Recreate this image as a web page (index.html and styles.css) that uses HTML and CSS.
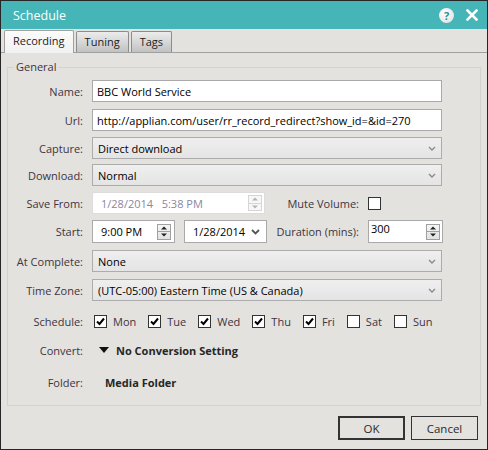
FILE: index.html
```html
<!DOCTYPE html>
<html lang="en">
<head>
    <meta charset="UTF-8">
    <title>Schedule</title>
    <link rel="stylesheet" href="styles.css">
</head>
<body>
    <div class="window">
        <div class="titlebar">
            <span class="title">Schedule</span>
            <span class="help">?</span>
            <svg class="close" width="12" height="12" viewBox="0 0 12 12">
                <path d="M1.5 1.5 L10.5 10.5 M10.5 1.5 L1.5 10.5" stroke="#fff" stroke-width="2.6" stroke-linecap="square"/>
            </svg>
        </div>

        <div class="tabs">
            <div class="tab active">Recording</div>
            <div class="tab">Tuning</div>
            <div class="tab">Tags</div>
        </div>

        <fieldset class="group">
            <legend>General</legend>

            <div class="row">
                <span class="lbl">Name:</span>
                <input class="text" type="text" value="BBC World Service">
            </div>

            <div class="row sp2">
                <span class="lbl">Url:</span>
                <input class="text" type="text" value="http://applian.com/user/rr_record_redirect?show_id=&amp;id=270">
            </div>

            <div class="row sp1">
                <span class="lbl">Capture:</span>
                <div class="select"><span>Direct download</span><svg class="chev" width="8" height="5" viewBox="0 0 8 5"><path d="M1 1 L4 4 L7 1" fill="none" stroke="#8a8a8a" stroke-width="1.4"/></svg></div>
            </div>

            <div class="row">
                <span class="lbl">Download:</span>
                <div class="select"><span>Normal</span><svg class="chev" width="8" height="5" viewBox="0 0 8 5"><path d="M1 1 L4 4 L7 1" fill="none" stroke="#8a8a8a" stroke-width="1.4"/></svg></div>
            </div>

            <div class="row sp1">
                <span class="lbl">Save From:</span>
                <div class="picker disabled">
                    <span>1/28/2014&nbsp;&nbsp;&nbsp;5:38 PM</span>
                    <div class="spin">
                        <div class="half"><svg width="6" height="4" viewBox="0 0 6 4"><path d="M0 3.5 L3 0.5 L6 3.5 Z" fill="#b4b4b4"/></svg></div>
                        <div class="half"><svg width="6" height="4" viewBox="0 0 6 4"><path d="M0 0.5 L3 3.5 L6 0.5 Z" fill="#b4b4b4"/></svg></div>
                    </div>
                </div>
                <span class="lbl2">Mute Volume:</span>
                <span class="box"></span>
            </div>

            <div class="row tall sp1">
                <span class="lbl">Start:</span>
                <div class="picker time">
                    <span>9:00 PM</span>
                    <div class="spin">
                        <div class="half"><svg width="6" height="4" viewBox="0 0 6 4"><path d="M0 3.5 L3 0.5 L6 3.5 Z" fill="#222"/></svg></div>
                        <div class="half"><svg width="6" height="4" viewBox="0 0 6 4"><path d="M0 0.5 L3 3.5 L6 0.5 Z" fill="#222"/></svg></div>
                    </div>
                </div>
                <div class="picker date">
                    <span>1/28/2014</span>
                    <svg class="chev" width="9" height="6" viewBox="0 0 9 6"><path d="M1 1 L4.5 4.5 L8 1" fill="none" stroke="#555" stroke-width="1.8"/></svg>
                </div>
                <span class="lbl2 dur">Duration (mins):</span>
                <div class="picker number">
                    <span>300</span>
                    <div class="spin">
                        <div class="half"><svg width="6" height="4" viewBox="0 0 6 4"><path d="M0 3.5 L3 0.5 L6 3.5 Z" fill="#222"/></svg></div>
                        <div class="half"><svg width="6" height="4" viewBox="0 0 6 4"><path d="M0 0.5 L3 3.5 L6 0.5 Z" fill="#222"/></svg></div>
                    </div>
                </div>
            </div>

            <div class="row sp2">
                <span class="lbl">At Complete:</span>
                <div class="select"><span>None</span><svg class="chev" width="8" height="5" viewBox="0 0 8 5"><path d="M1 1 L4 4 L7 1" fill="none" stroke="#8a8a8a" stroke-width="1.4"/></svg></div>
            </div>

            <div class="row sp2">
                <span class="lbl">Time Zone:</span>
                <div class="select"><span>(UTC-05:00) Eastern Time (US &amp; Canada)</span><svg class="chev" width="8" height="5" viewBox="0 0 8 5"><path d="M1 1 L4 4 L7 1" fill="none" stroke="#8a8a8a" stroke-width="1.4"/></svg></div>
            </div>

            <div class="row sp4">
                <span class="lbl">Schedule:</span>
                <div class="days">
                    <label class="day"><span class="box on"><svg width="11" height="11" viewBox="0 0 11 11"><path d="M2 5.5 L4.5 8 L9 2.5" fill="none" stroke="#000" stroke-width="2"/></svg></span>Mon</label>
                    <label class="day"><span class="box on"><svg width="11" height="11" viewBox="0 0 11 11"><path d="M2 5.5 L4.5 8 L9 2.5" fill="none" stroke="#000" stroke-width="2"/></svg></span>Tue</label>
                    <label class="day"><span class="box on"><svg width="11" height="11" viewBox="0 0 11 11"><path d="M2 5.5 L4.5 8 L9 2.5" fill="none" stroke="#000" stroke-width="2"/></svg></span>Wed</label>
                    <label class="day"><span class="box on"><svg width="11" height="11" viewBox="0 0 11 11"><path d="M2 5.5 L4.5 8 L9 2.5" fill="none" stroke="#000" stroke-width="2"/></svg></span>Thu</label>
                    <label class="day"><span class="box on"><svg width="11" height="11" viewBox="0 0 11 11"><path d="M2 5.5 L4.5 8 L9 2.5" fill="none" stroke="#000" stroke-width="2"/></svg></span>Fri</label>
                    <label class="day"><span class="box"></span>Sat</label>
                    <label class="day"><span class="box"></span>Sun</label>
                </div>
            </div>

            <div class="row sp2">
                <span class="lbl">Convert:</span>
                <div class="convert">
                    <svg width="10" height="6" viewBox="0 0 10 6"><path d="M0 0 L10 0 L5 6 Z" fill="#111"/></svg>
                    <b>No Conversion Setting</b>
                </div>
            </div>

            <div class="row sp5">
                <span class="lbl">Folder:</span>
                <b class="folder">Media Folder</b>
            </div>
        </fieldset>

        <div class="buttons">
            <button class="btn default">OK</button>
            <button class="btn">Cancel</button>
        </div>
    </div>
</body>
</html>
```

FILE: styles.css
```css
* {
    margin: 0;
    padding: 0;
    box-sizing: border-box;
}

body {
    font-family: "Open Sans", "Noto Sans", sans-serif;
    font-size: 11px;
    color: #000;
    background: #fff;
}

.window {
    width: 488px;
    height: 450px;
    border: 1px solid #262626;
    background: #e3e2de;
    display: flex;
    flex-direction: column;
}

/* title bar */
.titlebar {
    height: 28px;
    background: #45b5b8;
    display: flex;
    align-items: center;
    padding: 0 9px 0 12px;
    color: #fff;
}

.title {
    flex: 1;
    font-size: 12.5px;
}

.help {
    width: 15px;
    height: 15px;
    border-radius: 50%;
    background: radial-gradient(circle at 40% 35%, #ffffff, #dcdcdc);
    color: #2f8f93;
    font-weight: 700;
    font-size: 11px;
    line-height: 15px;
    text-align: center;
    margin-right: 12px;
}

/* tabs */
.tabs {
    height: 24px;
    display: flex;
    align-items: flex-end;
    gap: 2px;
    padding-left: 3px;
    border-bottom: 1px solid #a0a0a0;
}

.tab {
    height: 21px;
    padding: 0 8px;
    border: 1px solid #8c8c8c;
    border-bottom: none;
    border-radius: 2px 2px 0 0;
    background: linear-gradient(#ececec, #c2c2c2);
    font-size: 11px;
    line-height: 20px;
    color: #1c1c1c;
}

.tab.active {
    height: 23px;
    margin-bottom: -1px;
    border-color: #a0a0a0;
    background: linear-gradient(#fbfbfb, #f1f1f1);
}

/* group box */
.group {
    margin: 6px 6px 0 6px;
    border: 1px solid #d3d2ce;
    padding: 5px 0 12px 0;
    display: flex;
    flex-direction: column;
    gap: 5px;
}

.group legend {
    margin-left: 6px;
    padding: 0 2px;
    line-height: 16px;
    font-size: 11px;
    color: #3f3440;
}

.row {
    height: 22px;
    display: flex;
    align-items: center;
}

.row.tall {
    height: 23px;
}

.sp1 { margin-top: 1px; }
.sp2 { margin-top: 2px; }
.sp4 { margin-top: 4px; }
.sp5 { margin-top: 5px; }

.lbl {
    width: 75px;
    margin-right: 9px;
    text-align: right;
    color: #3f3440;
}

.lbl2 {
    width: 94px;
    margin-right: 9px;
    text-align: right;
    color: #3f3440;
}

.lbl2.dur {
    width: 92px;
}

.text {
    width: 350px;
    height: 22px;
    border: 1px solid #a9a9a9;
    background: #fff;
    padding: 0 4px;
    font: inherit;
    color: #000;
}

.select {
    width: 350px;
    height: 22px;
    border: 1px solid #acacac;
    background: linear-gradient(#efefef, #e4e4e4);
    display: flex;
    align-items: center;
    padding: 0 5px;
}

.select span {
    flex: 1;
}

.chev {
    display: block;
}

/* pickers and spinners */
.picker {
    height: 100%;
    border: 1px solid #a9a9a9;
    background: #fff;
    display: flex;
    align-items: center;
}

.picker span {
    flex: 1;
}

.picker.disabled {
    width: 173px;
    border-color: #dcdcdc;
    color: #8c86a0;
    padding: 0 2px 0 8px;
}

.picker.time {
    width: 83px;
    padding: 0 3px 0 8px;
}

.picker.date {
    width: 83px;
    margin-left: 9px;
    padding: 0 6px 0 8px;
}

.picker.number {
    width: 75px;
    padding: 0 2px 0 2px;
    align-items: flex-start;
}

.picker.number span {
    line-height: 16px;
}

.picker.number .spin {
    align-self: center;
}

.spin {
    width: 14px;
    height: 16px;
    border: 1px solid #a0a0a0;
    background: linear-gradient(#f6f6f6, #e2e2e2);
    display: flex;
    flex-direction: column;
}

.disabled .spin {
    border-color: #d6d6d6;
    background: #f7f7f7;
}

.half {
    flex: 1;
    display: flex;
    align-items: center;
    justify-content: center;
}

.half + .half {
    border-top: 1px solid #a0a0a0;
}

.disabled .half + .half {
    border-top-color: #d6d6d6;
}

.half svg {
    display: block;
}

/* checkboxes */
.box {
    width: 13px;
    height: 13px;
    border: 1px solid #333;
    background: #fff;
    display: flex;
    align-items: center;
    justify-content: center;
}

.days {
    display: flex;
    align-items: center;
    margin-left: 2px;
}

.day {
    display: flex;
    align-items: center;
    gap: 6px;
    margin-right: 12px;
    color: #3f3440;
}

/* convert & folder */
.convert {
    display: flex;
    align-items: center;
    gap: 7px;
    margin-left: 7px;
}

.convert b,
.folder {
    font-weight: 700;
    color: #262626;
}

.folder {
    margin-left: 13px;
}

/* buttons */
.buttons {
    display: flex;
    justify-content: flex-end;
    gap: 6px;
    padding: 10px 9px 0 0;
}

.btn {
    width: 67px;
    height: 24px;
    border: 1px solid #333;
    background: #e3e2de;
    font: inherit;
    font-size: 11.5px;
    color: #2a2a2a;
}

.btn.default {
    border-width: 2px;
}
```
